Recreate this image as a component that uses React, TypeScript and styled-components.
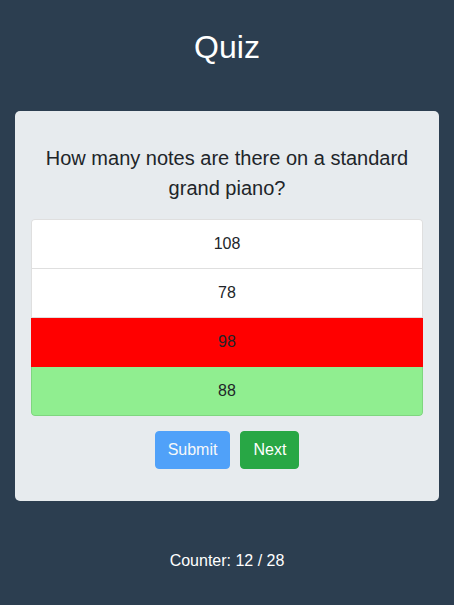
import React from "react";
import styled, { createGlobalStyle } from "styled-components";

const Global = createGlobalStyle`
  html, body { margin: 0; padding: 0; background: #2c3e50; }
  body { font-family: "Liberation Sans", Arial, sans-serif; min-height: 605px; }
  * { box-sizing: border-box; }
`;

const Page = styled.div`
  display: flex;
  flex-direction: column;
  align-items: stretch;
  padding: 28px 15px 0;
  color: #fff;
`;

const Title = styled.h1`
  margin: 0 0 45px;
  font-size: 32px;
  font-weight: 400;
  line-height: 38px;
  text-align: center;
  color: #fff;
`;

const Card = styled.div`
  background: #e7ebee;
  border-radius: 5px;
  padding: 32px 16px 15px;
  display: flex;
  flex-direction: column;
`;

const Question = styled.h2`
  margin: 0 0 16px;
  font-size: 20px;
  font-weight: 400;
  line-height: 30px;
  text-align: center;
  color: #212529;
`;

const List = styled.ul`
  list-style: none;
  margin: 0;
  padding: 0;
  display: flex;
  flex-direction: column;
  border-radius: 4px;
  overflow: hidden;
`;

type State = "none" | "wrong" | "right";

const Item = styled.li<{ $state: State }>`
  padding: 12px 20px;
  font-size: 16px;
  line-height: 24px;
  text-align: center;
  color: #212529;
  background: ${(p) =>
    p.$state === "wrong" ? "#ff0000" : p.$state === "right" ? "#90ee90" : "#fff"};
  border: 1px solid
    ${(p) =>
      p.$state === "wrong" ? "#ff0000" : p.$state === "right" ? "#7fd67f" : "rgba(0,0,0,0.125)"};
  & + & { border-top-width: 0; }
  &:first-child { border-radius: 4px 4px 0 0; }
  &:last-child { border-radius: 0 0 4px 4px; }
`;

const Actions = styled.div`
  display: flex;
  justify-content: center;
  gap: 10px;
  margin: 15px 0 17px;
`;

const Button = styled.button<{ $variant: "primary" | "success"; disabled?: boolean }>`
  font-family: inherit;
  font-size: 16px;
  line-height: 24px;
  padding: 6px 12px;
  border-radius: 4px;
  border: 1px solid ${(p) => (p.$variant === "primary" ? "#007bff" : "#28a745")};
  background: ${(p) => (p.$variant === "primary" ? "#007bff" : "#28a745")};
  color: #fff;
  opacity: ${(p) => (p.disabled ? 0.65 : 1)};
  cursor: pointer;
`;

const Counter = styled.p`
  margin: 48px 0 0;
  font-size: 16px;
  line-height: 24px;
  text-align: center;
  color: #fff;
`;

const answers: { label: string; state: State }[] = [
  { label: "108", state: "none" },
  { label: "78", state: "none" },
  { label: "98", state: "wrong" },
  { label: "88", state: "right" },
];

export default function App() {
  return (
    <>
      <Global />
      <Page>
        <Title>Quiz</Title>
        <Card>
          <Question>How many notes are there on a standard grand piano?</Question>
          <List>
            {answers.map((a) => (
              <Item key={a.label} $state={a.state}>
                {a.label}
              </Item>
            ))}
          </List>
          <Actions>
            <Button $variant="primary" disabled>
              Submit
            </Button>
            <Button $variant="success">Next</Button>
          </Actions>
        </Card>
        <Counter>Counter: 12 / 28</Counter>
      </Page>
    </>
  );
}
